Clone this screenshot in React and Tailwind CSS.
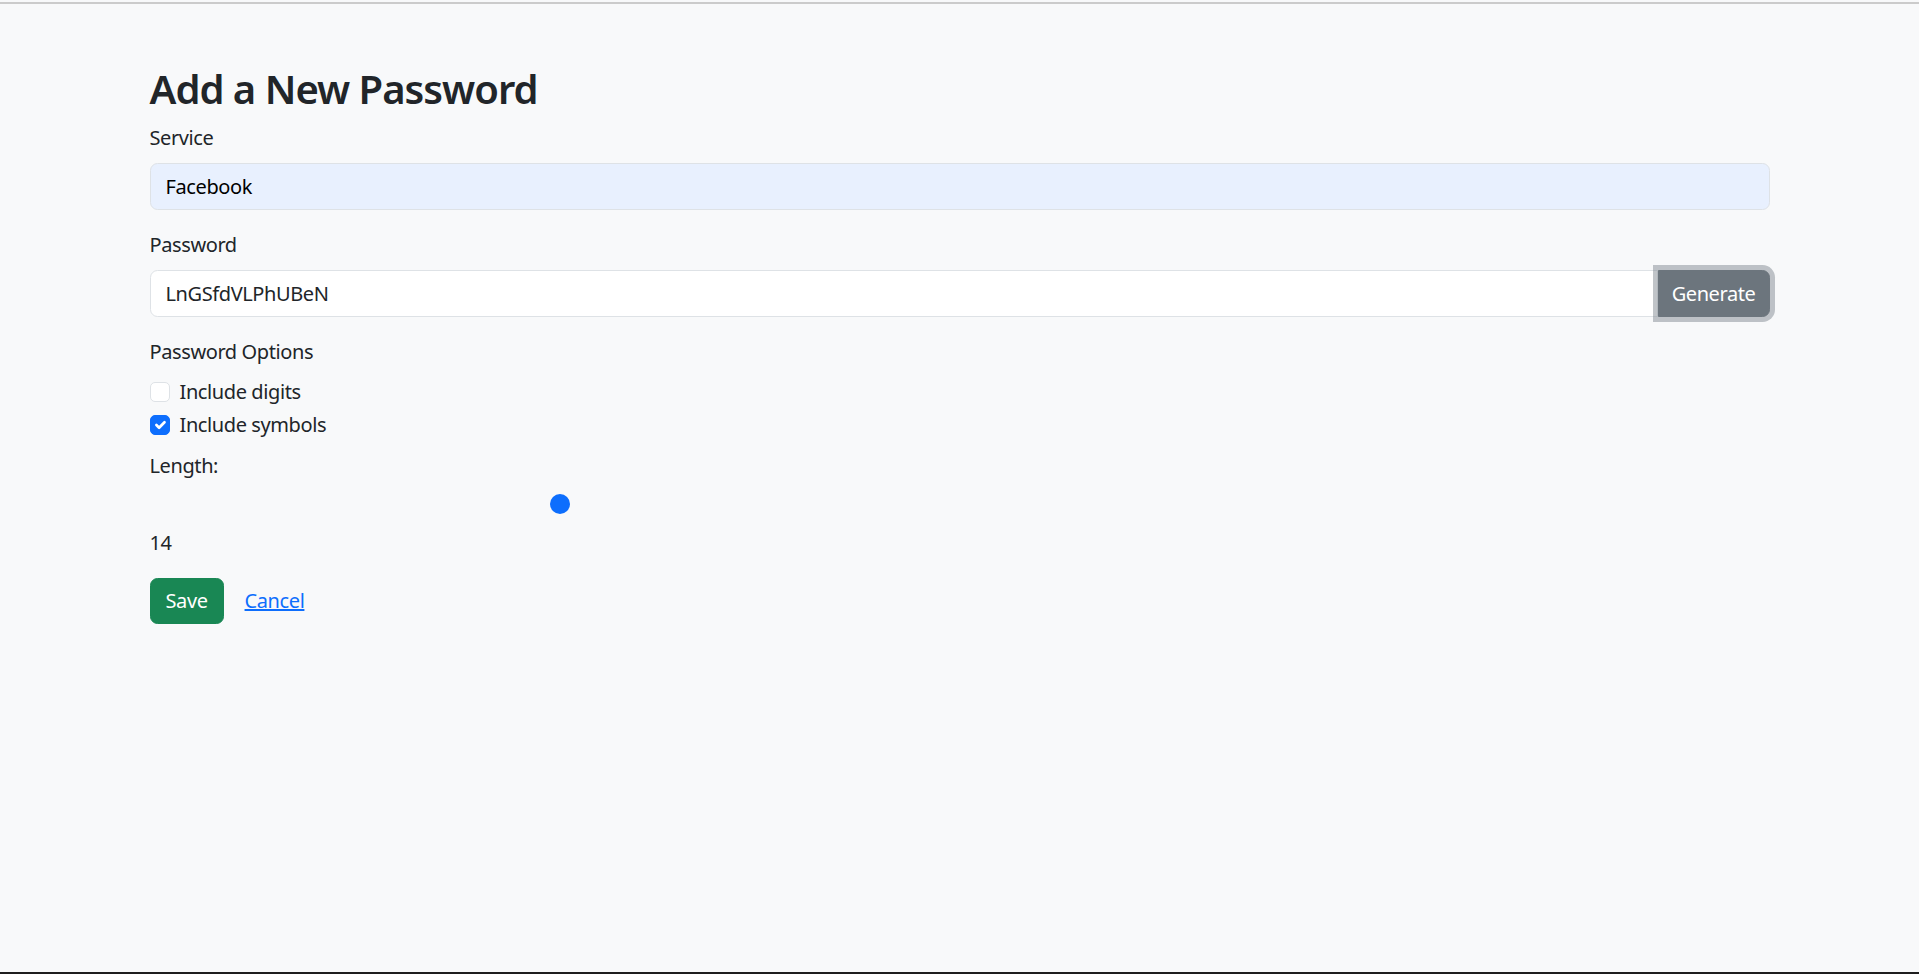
import React, { useState } from 'react';

const CheckBox = ({ checked }) => (
  <span
    className={
      checked
        ? 'mt-[5px] flex h-5 w-5 shrink-0 items-center justify-center rounded-[5px] border border-[#0d6efd] bg-[#0d6efd]'
        : 'mt-[5px] flex h-5 w-5 shrink-0 items-center justify-center rounded-[5px] border border-[#dee2e6] bg-white'
    }
  >
    {checked && (
      <svg viewBox="0 0 20 20" className="h-5 w-5">
        <path d="m6 10 3 3 6-6" fill="none" stroke="#fff" strokeWidth="3" strokeLinecap="round" strokeLinejoin="round" />
      </svg>
    )}
  </span>
);

const App = () => {
  const [service, setService] = useState('Facebook');
  const [password, setPassword] = useState('LnGSfdVLPhUBeN');
  const [digits, setDigits] = useState(false);
  const [symbols, setSymbols] = useState(true);
  const [length, setLength] = useState(14);

  return (
    <div className="flex h-screen flex-col bg-[#f8f9fa] font-['Segoe_UI','Noto_Sans',sans-serif] text-[20px] leading-[30px] tracking-[-0.4px] text-[#212529]">
      {/* browser chrome edge */}
      <div className="h-[2px] shrink-0" />
      <div className="h-[2px] shrink-0 bg-[#cbcbcb]" />

      <main className="flex-1">
        <div className="mx-auto w-[1650px] px-[15px] pt-[61px]">
          <h1 className="mb-[10px] text-[40px] font-semibold leading-[48px] tracking-[-1px]">Add a New Password</h1>

          <form onSubmit={(e) => e.preventDefault()}>
            {/* Service */}
            <div className="mb-[20px]">
              <label className="mb-[10px] block">Service</label>
              <input
                className="block h-[47px] w-full rounded-[7.5px] border border-[#dee2e6] bg-[#e8f0fe] px-[15px] text-black outline-none"
                value={service}
                onChange={(e) => setService(e.target.value)}
              />
            </div>

            {/* Password */}
            <div className="mb-[20px]">
              <label className="mb-[10px] block">Password</label>
              <div className="flex">
                <input
                  className="block h-[47px] min-w-0 flex-1 rounded-l-[7.5px] border border-[#dee2e6] bg-white px-[15px] text-[#212529] outline-none"
                  value={password}
                  onChange={(e) => setPassword(e.target.value)}
                />
                <button
                  type="button"
                  className="h-[47px] rounded-r-[7.5px] border border-[#6c757d] bg-[#6c757d] px-[13px] text-white shadow-[0_0_0_5px_rgba(130,138,145,0.5)]"
                >
                  Generate
                </button>
              </div>
            </div>

            {/* Options */}
            <div className="mb-[11px] flex flex-col gap-[2.5px]">
              <label className="mb-[7.5px] block">Password Options</label>
              <label className="flex cursor-pointer items-start gap-[10px]" onClick={() => setDigits(!digits)}>
                <CheckBox checked={digits} />
                <span>Include digits</span>
              </label>
              <label className="flex cursor-pointer items-start gap-[10px]" onClick={() => setSymbols(!symbols)}>
                <CheckBox checked={symbols} />
                <span>Include symbols</span>
              </label>
            </div>

            {/* Length */}
            <div className="mb-[20px]">
              <label className="mb-[8px] block">Length:</label>
              <input
                type="range"
                min={8}
                max={32}
                value={length}
                onChange={(e) => setLength(Number(e.target.value))}
                className="block h-[30px] w-full appearance-none bg-transparent p-0 outline-none [&::-webkit-slider-runnable-track]:h-[10px] [&::-webkit-slider-runnable-track]:bg-transparent [&::-webkit-slider-thumb]:-mt-[5px] [&::-webkit-slider-thumb]:h-5 [&::-webkit-slider-thumb]:w-5 [&::-webkit-slider-thumb]:appearance-none [&::-webkit-slider-thumb]:rounded-full [&::-webkit-slider-thumb]:border-0 [&::-webkit-slider-thumb]:bg-[#0d6efd]"
              />
              <div className="mt-[9px]">{length}</div>
            </div>

            <div className="flex items-center">
              <button type="submit" className="h-[46px] rounded-[7.5px] border border-[#198754] bg-[#198754] px-[15px] text-white">
                Save
              </button>
              <a href="#" className="ml-[21px] text-[#0d6efd] underline">
                Cancel
              </a>
            </div>
          </form>
        </div>
      </main>

      <div className="h-[2px] shrink-0 bg-[#1e1e1e]" />
    </div>
  );
};

export default App;
